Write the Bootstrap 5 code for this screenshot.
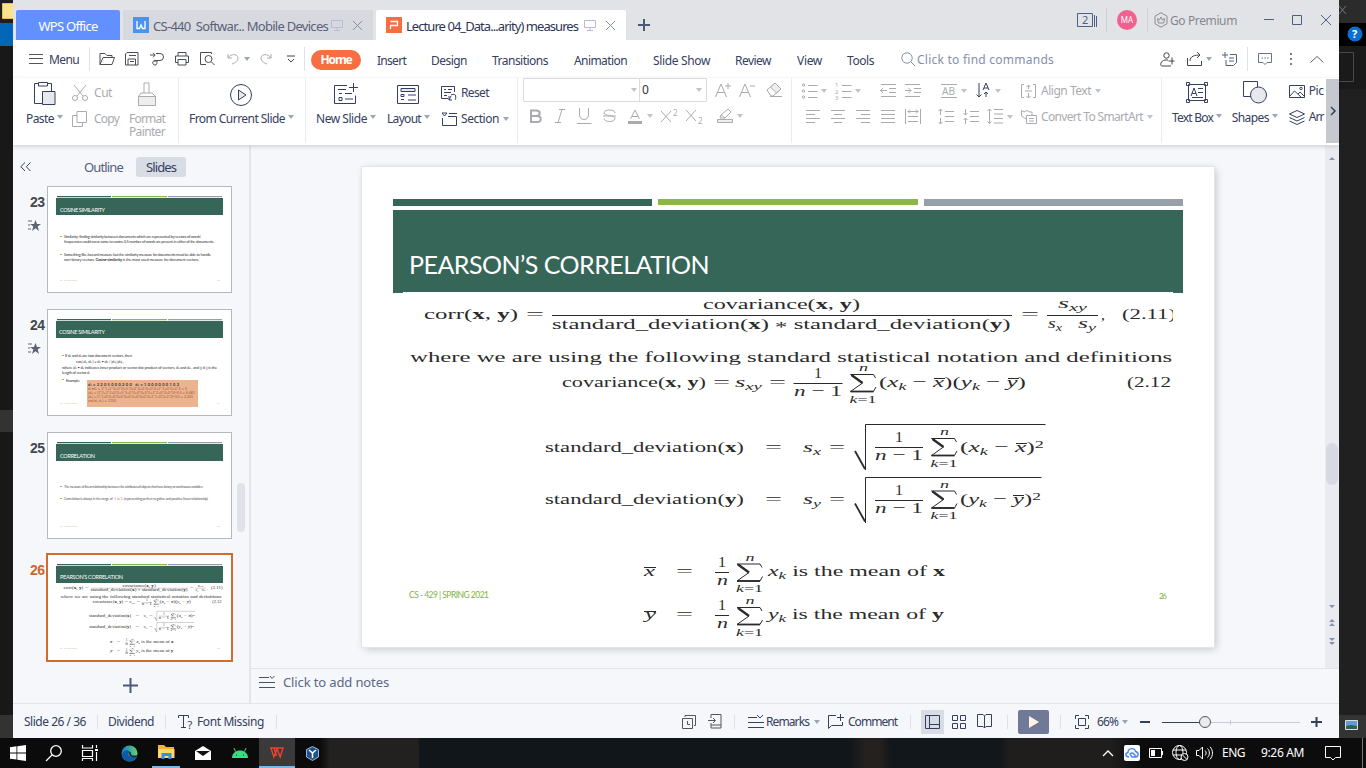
<!DOCTYPE html>
<html lang="en">
<head>
<meta charset="utf-8">
<meta name="viewport" content="width=device-width, initial-scale=1">
<title>WPS Office - Lecture 04</title>
<link href="https://cdn.jsdelivr.net/npm/bootstrap@5.3.0/dist/css/bootstrap.min.css" rel="stylesheet">
<style>
:root{--ink:#34405e;--dim:#a9abb0;--line:#e2e4ea;--pane:#f5f7fa;--green:#366658}
body{width:1366px;height:768px;overflow:hidden;background:#181818;font-family:"Noto Sans","Open Sans",sans-serif;font-size:12px;line-height:14px;color:var(--ink);fill:none;stroke:currentColor}
svg{display:block;overflow:visible}
svg text{stroke:none;fill:currentColor}
.fit{white-space:nowrap;display:inline-block}
.desk{height:738px}
.edge-l{width:13px;background:linear-gradient(#1f1f1f 23px,#0067b8 23px 46px,#181818 46px 410px,#333 410px 432px,#181818 432px 715px,#333 715px)}
.edge-r{width:27px;background:linear-gradient(#2b2b2b 23px,#000 23px 46px,#1a1a1a 46px 89px,#202020 89px 715px,#333 715px)}
.win{width:1326px;background:var(--pane)}
.strip{display:grid;align-items:center;justify-items:start}
.sep{width:1px;height:24px;background:#dfe1e6}
.caret{width:0;height:0;border:3px solid transparent;border-top:4px solid #9aa4bd;border-bottom:0}
/* title bar */
.titlebar{height:40px;background:#e2e3e7;padding-left:3px}
.doctab{height:30px;margin-top:10px;border-radius:2px 2px 0 0;font-size:13px}
.doctab .fit{margin-top:1px}
.tab-home{width:104px;background:#6390ff;color:#fff;margin-right:3px}
.tab-doc{width:250px;background:#d8d9de;color:#56617a;margin-right:3px;padding-left:10px;grid-template-columns:20px 178px 21px 20px}
.tab-on{background:#fff;color:#2c3654}
.sys{grid-template-columns:29px 11px 30px 7px 16px 94px 28px 29px 18px;height:40px;color:#4f5f86}
.sys .sep{background:#cfd1d7}
.avatar{width:20px;height:20px;background:#f1608f;color:#fff;font-size:8px}
.premium{color:#85878c;margin-top:2px}
/* menu bar */
.menubar{height:38px;background:#fff;padding-left:15px;grid-template-columns:21px 40px 10px 25px 26px 25px 25px 27px 17px 16px 27px 17px 7px 66px 54px 61px 82px 79px 82px 62px 50px 54px 16px 243px 27px 19px 16px 25px 11px 30px 22px 20px}
.menubar>.fit{margin-top:3px}
.menubar>.fit.up{margin-top:1px}
.finder{color:#8490ab}
.pill{width:50px;height:20px;margin-top:1px;background:#f66e42;color:#fff;font-weight:700}
/* ribbon */
.ribbon{height:68px;background:#fff;border-bottom:1px solid #dadce2;box-shadow:0 1px 4px #0002;z-index:2}
.ribbon .grp{border-right:1px solid #ebecf0;height:65px}
.off{color:var(--dim)}
.off .caret{border-top-color:#bcc3d3}
.big{height:54px;padding-top:4px}
.big .pic{height:30px}
.big .caret{margin-top:3px}
.big>.gap-1{gap:3px!important}
.duo{grid-auto-rows:26px}
.fontbox{width:184px;height:24px;border:1px solid #d9dbe0;border-radius:1px}
.fontbox .size{border-left:1px solid #d9dbe0;line-height:22px;padding-left:2px;margin-left:2px;color:#333}
.scroller{width:13px;height:64px;background:#c6c8d0;margin-top:1px}
.arrange{width:38px;overflow:hidden}
/* slide panel */
.panel{width:238px;border-right:2px solid var(--line)}
.phead{height:39px;font-size:13px;padding:3px 0 0 7px;grid-template-columns:64px 52px 50px}
.chip{width:50px;height:20px;background:#d8dde5;border-radius:3px}
.thumbrow{height:107px;padding-left:15px;margin-bottom:16px}
.no{width:19px;height:107px;padding:9px 0 0 2px;font-size:14px;letter-spacing:-.5px;font-weight:700;color:#45474e;font-family:"Liberation Sans",sans-serif}
.no svg{margin:11px 0 0 -2px}
.no.on{color:#c9682c}
.thumb{width:185px;height:107px;background:#fff;border:1px solid #b5b8be}
.thumb.cur{width:187px;height:109px;border:2px solid #d46b2c;margin:-1px}
.ptrack{width:8px;height:49px;background:#dfe2e9;border-radius:4px;margin-top:298px}
/* stage */
.stagebox{height:522px}
.slide{width:852px;height:480px;background:#fff;margin:21px 0 0 111px;box-shadow:0 0 0 1px #e4e5e8,2px 2px 8px #0003}
.bars{margin:0 31px;padding-top:32px;height:39px;gap:6px}
.bars>div{height:7px;flex:1}
.band{margin:4px 31px 0;height:83px;background:var(--green);color:#fff;font:25px/30px Lato,sans-serif;padding:39px 0 0 16px}
.figure-eq{margin:-1px 0 0 41px;width:770px;height:354px;background:#fff;overflow:hidden}
.vtrack{width:14px;background:#eaebf0}
.vtrack svg{fill:#8592ae;stroke:none}
.vthumb{width:12px;height:42px;background:#d6d9e1;border-radius:6px;margin-top:283px}
.notes{height:35px;border-top:1px solid var(--line);grid-template-columns:24px 120px;padding:0 0 8px 8px;color:#5b6885;font-size:13px}
/* status bar */
.status{height:35px;border-top:1px solid var(--line);padding:1px 0 0 11px;grid-template-columns:73px 11px 57px 13px 19px 79px 406px 26px 26px 14px 18px 48px 14px 20px 62px 11px 31px 25px 30px 11px 42px 15px 22px 25px 18px 22px 149px 16px}
.status .fit{margin-top:1px}
.status .sep{height:14px}
.viewbtn{width:23px;height:24px;background:#d8dde5}
.play{width:31px;height:24px;background:#707a97;border-radius:2px}
/* taskbar */
.taskbar{height:30px;background:linear-gradient(90deg,#0b0b0b 0 320px,#222120 330px 418px,#11161a 420px 850px,#25211f 866px 880px,#12171b 890px 1000px,#1f1e1d 1010px 1110px,#0c0c0c 1140px);color:#fff;padding-left:10px;grid-template-columns:36px 36px 39px 31px 43px 37px 27px 47px 796px 22px 25px 23px 24px 26px 39px 64px 37px 4px}
.run{width:28px;height:30px;border-bottom:2px solid #76b9ed}
.act{width:36px;background:#3a3a3a}
</style>
</head>
<body>
<div class="desk d-flex">
  <div class="edge-l"><svg width="13" height="24"><path d="M2.500 3.500h11v15h-11z" fill="#fbe38e" stroke="#e5c34f"/></svg></div>
  <div class="win d-flex flex-column">
    <div class="titlebar d-flex">
      <div class="doctab tab-home d-flex align-items-center justify-content-center"><span class="fit" data-w="59">WPS Office</span></div>
      <div class="doctab tab-doc strip">
        <svg width="16" height="16"><rect width="16" height="16" fill="#4a93f0" stroke="none"/><path d="M4 4v7.500h2.500L8 8l1.500 3.500H12V4" stroke="#fff" stroke-width="1.300"/></svg>
        <span class="fit" data-w="175">CS-440&nbsp; Softwar... Mobile Devices</span>
        <svg width="12" height="12" stroke="#b3bdd6"><path d="M.5 1.500h11v7H.5zM6 9v2M3 11.500h6"/></svg>
        <svg width="11" height="11" stroke="#8592ae"><path d="M1 1l9 9M10 1l-9 9"/></svg>
      </div>
      <div class="doctab tab-doc tab-on strip">
        <svg width="16" height="16"><rect width="16" height="16" fill="#f66e42" stroke="none"/><path d="M4.500 12V8.500h7v-4h-7" stroke="#fff" stroke-width="1.300"/></svg>
        <span class="fit" data-w="172">Lecture 04_Data...arity) measures</span>
        <svg width="12" height="12" stroke="#b3bdd6"><path d="M.5 1.500h11v7H.5zM6 9v2M3 11.500h6"/></svg>
        <svg width="11" height="11" stroke="#8592ae"><path d="M1 1l9 9M10 1l-9 9"/></svg>
      </div>
      <svg class="ms-2 mt-3" width="14" height="18"><path d="M1 9h12M7 3v12" stroke="#4b5a7a" stroke-width="2"/></svg>
      <div class="sys strip ms-auto">
        <svg width="21" height="15"><path d="M.5.5h15v13H.5zM17.500 2v12M19.500 3v11"/><text x="5" y="11" font-size="11">2</text></svg>
        <i class="sep"></i>
        <div class="avatar rounded-circle d-flex align-items-center justify-content-center">MA</div>
        <i class="sep"></i>
        <svg width="14" height="16" stroke="#8b8d92"><path d="M7 .7l6 3.500v7.500l-6 3.500-6-3.500V4.200zM3.500 6.500l2 1.500L7 5l1.500 3 2-1.500-.8 4.500H4.300z"/></svg>
        <span class="fit premium" data-w="67">Go Premium</span>
        <svg width="10" height="10"><path d="M0 4.500h10"/></svg>
        <svg width="10" height="10"><path d="M.5.5h9v9h-9z"/></svg>
        <svg width="10" height="10"><path d="M0 0l10 10M10 0L0 10"/></svg>
      </div>
    </div>

    <div class="menubar strip">
      <svg width="15" height="10"><path d="M1 .5h14M1 4.500h14M1 9.500h14" stroke="#555"/></svg>
      <span class="fit up" data-w="30">Menu</span>
      <i class="sep"></i>
      <svg width="16" height="14" stroke="#4a4d55"><path d="M1 12.500v-11h5l2 2h5v2M1 12.500l3-7h11.500l-2.500 7z"/></svg>
      <svg width="15" height="14" stroke="#4a4d55"><path d="M1.500 2L3 .5h11v12.500H1.500zM4 13V7h7.500v6M5 3.500h7M6 9.500h4"/></svg>
      <svg width="15" height="14" stroke="#4a4d55"><path d="M0 3h5M3 .8L5.200 3 3 5.200M6 1.500h4a3.500 3.500 0 0 1 0 7H5V10M5 8.500C2 8.500 2 13 5 13c2 0 2-2 2-4.500"/></svg>
      <svg width="14" height="14" stroke="#4a4d55"><path d="M3 4V.5h8V4M3 10.500H.5V4h13v6.500H11M3 7.500h8v5.500H3z"/></svg>
      <svg width="16" height="14" stroke="#4a4d55"><path d="M6 12.500H.5V.5h11V2M11.500 10l3 3"/><circle cx="8.500" cy="7" r="3.500"/></svg>
      <svg width="12" height="12" class="off"><path d="M1 1v4h4M1 5c3-5 10-4 10 0 0 3-3 5-6 6"/></svg>
      <i class="caret"></i>
      <svg width="12" height="12" class="off"><path d="M11 1v4H7M11 5C8 0 1 1 1 5c0 3 3 5 6 6"/></svg>
      <svg width="9" height="9"><path d="M0 1h8M1 4l3 3 3-3" stroke="#444"/></svg>
      <i class="sep"></i>
      <div class="pill rounded-pill d-flex align-items-center justify-content-center"><span class="fit" data-w="31">Home</span></div>
      <span class="fit" data-w="29">Insert</span>
      <span class="fit" data-w="36">Design</span>
      <span class="fit" data-w="56">Transitions</span>
      <span class="fit" data-w="53">Animation</span>
      <span class="fit" data-w="57">Slide Show</span>
      <span class="fit" data-w="36">Review</span>
      <span class="fit" data-w="25">View</span>
      <span class="fit" data-w="27">Tools</span>
      <svg width="14" height="14" stroke="#8592ae"><circle cx="6" cy="6" r="5.200"/><path d="M10 10l4 4"/></svg>
      <span class="fit up finder" data-w="137">Click to find commands</span>
      <svg width="15" height="15" stroke="#444"><circle cx="6.500" cy="3.500" r="2.700"/><path d="M8 8H5c-5 1-5 6-3 6h9M12 5.500v7M8.500 9h6"/></svg>
      <svg width="16" height="14" stroke="#444"><path d="M.5 6v7.500h14V9M3 9c0-5 5-6 10-6M10 0l3 3-3 3"/></svg>
      <i class="caret"></i>
      <svg width="16" height="14" stroke="#55607c"><path d="M0 3h6M3 0v6M8 2.500h6.500v8l-3 3H4V8M7 6h5M7 9h5"/></svg>
      <i class="sep"></i>
      <svg width="14" height="13" stroke="#6a7388"><path d="M.5.5h13v9H9l-2 2-2-2H.5zM3.500 5h1.500M6.300 5h1.500M9 5h1.500"/></svg>
      <svg width="6" height="12" fill="#777d8c" stroke="none"><path d="M2 0h2v2H2zM2 5h2v2H2zM2 10h2v2H2z"/></svg>
      <svg width="15" height="8" stroke="#55607c"><path d="M.5 7.500l6.500-6 6.500 6"/></svg>
    </div>

    <div class="ribbon d-flex">
      <div class="grp d-flex" style="width:166px">
        <div class="big" style="width:57px;padding-left:13px">
          <div class="pic ps-2"><svg width="22" height="24"><path d="M8 21.500H.5v-20H4M14 1.500h3.500V9M4.500.5h9V4h-9z"/><path d="M8.500 9.500h12.500v13H8.500z" fill="#e7e9ef"/></svg></div>
          <div class="d-flex gap-1"><span class="fit" data-w="28">Paste</span><i class="caret"></i></div>
        </div>
        <div class="strip duo off" style="width:50px;grid-template-columns:22px 28px;height:52px;padding-left:2px;margin-top:2px">
          <svg width="16" height="16"><path d="M2 0l9 11M14 0L5 11"/><circle cx="3" cy="13" r="2.500"/><circle cx="13" cy="13" r="2.500"/></svg><span class="fit" data-w="18">Cut</span>
          <svg width="16" height="16"><path d="M5 .5h9.500v11H5zM5 4.500H.5v11h10v-4"/></svg><span class="fit" data-w="25">Copy</span>
        </div>
        <div class="big off text-center" style="width:54px">
          <div class="pic d-flex justify-content-center"><svg width="18" height="24"><path d="M6 11V1h5v10M.5 14.500L3 11h11l3.500 3.500z"/><path d="M.5 14.500h17v9H.5z" fill="#eee"/></svg></div>
          <div style="line-height:13px"><span class="fit" data-w="36">Format</span><br><span class="fit" data-w="36">Painter</span></div>
        </div>
      </div>
      <div class="grp big" style="width:127px;padding-left:10px">
        <div class="pic" style="padding-left:41px"><svg width="22" height="24"><circle cx="11" cy="13" r="10.500"/><path d="M8.500 8l7.500 5-7.500 5z" fill="#e7e9ef"/></svg></div>
        <div class="d-flex gap-1"><span class="fit" data-w="96">From Current Slide</span><i class="caret"></i></div>
      </div>
      <div class="grp d-flex" style="width:212px">
        <div class="big" style="width:81px;padding-left:10px">
          <div class="pic" style="padding-left:18px"><svg width="25" height="24"><path d="M13 3.500H.5v18h21v-8M4 7.500h8M11 11.500h7M11 17h8M5 15.500h3v3H5zM5 11.500h3M19.500 1v9M15 5.500h9"/></svg></div>
          <div class="d-flex gap-1"><span class="fit" data-w="51">New Slide</span><i class="caret"></i></div>
        </div>
        <div class="big" style="width:51px">
          <div class="pic" style="padding-left:10px"><svg width="22" height="24"><path d="M.5 3.500h21v18H.5zM11 13h8M11 18h8M4 12.500h3v2H4zM4 17.500h3"/><path d="M4 6.500h14v3H4z" fill="#e7e9ef"/></svg></div>
          <div class="d-flex gap-1"><span class="fit" data-w="34">Layout</span><i class="caret"></i></div>
        </div>
        <div class="strip duo" style="grid-template-columns:20px 42px 10px;padding-left:3px;margin-top:2px;height:52px">
          <svg width="16" height="15"><path d="M7 12.500H.5V.5h13V6M3 3.500h2M7 3.500h4M3 6.500h7M3 9.500h3M8 14l2-4 M8 10v4h3M10 9c6-3 5 4 4 5"/></svg><span class="fit" data-w="28">Reset</span><i></i>
          <svg width="16" height="15"><path d="M1 1h5L3.500 4zM8 1.500h8M7 4.500h8.500v9H1.500V6"/></svg><span class="fit" data-w="38">Section</span><i class="caret"></i>
        </div>
      </div>
      <div class="grp off" style="width:274px;padding-left:5px">
        <div class="strip" style="grid-template-columns:192px 24px 27px 20px;height:24px">
          <div class="fontbox d-flex align-items-center"><i class="caret" style="margin-left:107px"></i><span class="size">0</span><i class="caret ms-auto me-1"></i></div>
          <svg width="16" height="16"><path d="M.5 15L6 2l5.500 13M2.500 10.500h7M13 1v6M10 4h6"/></svg>
          <svg width="16" height="16"><path d="M.5 15L6 2l5.500 13M2.500 10.500h7M11 4h5"/></svg>
          <svg width="17" height="16"><path d="M1 8l8-7 6 6-8 7H5zM4 14.500h12"/><path d="M4.500 5L9 1l6 6-4.500 4z" fill="#eee"/></svg>
        </div>
        <div class="strip" style="grid-template-columns:26px 22px 26px 25px 19px 14px 25px 31px 20px 10px;height:28px;padding-left:6px">
          <svg width="12" height="15" stroke-width="2"><path d="M2 1.500h5c5 0 5 5.500 0 5.500H2zM2 7h6c5 0 5 6 0 6H2z"/></svg>
          <svg width="10" height="14"><path d="M4 .5h6M0 13.500h6M7 .5L3 13.500"/></svg>
          <svg width="15" height="16"><path d="M2.500 0v7c0 6 9 6 9 0V0M0 15.500h14.500"/></svg>
          <svg width="13" height="14"><path d="M12 4c0-4-11-4-11 0 0 3 11 2 11 5.500 0 4-11 4-11 0M0 7h13"/></svg>
          <svg width="14" height="15"><path d="M2.500 10L7 1l4.500 9M4 7.500h6"/><path d="M0 13.500h14" stroke-width="3"/></svg><i class="caret"></i>
          <svg width="17" height="16"><path d="M0 3l10 11M10 3L0 14"/><text x="12" y="8" font-size="8">2</text></svg>
          <svg width="17" height="16"><path d="M0 2l10 11M10 2L0 13"/><text x="12" y="16" font-size="8">2</text></svg>
          <svg width="17" height="16"><path d="M3 10l1-3 7-6 3 3-6 6zM4 7l4 3"/><path d="M.5 11.500h15v3H.5z" fill="#eee"/></svg><i class="caret"></i>
        </div>
      </div>
      <div class="grp off d-flex" style="width:370px;padding-left:10px">
        <div style="width:219px">
          <div class="strip" style="grid-template-columns:19px 15px 19px 25px 25px 36px 20px 15px 19px 10px;height:25px">
            <svg width="16" height="16"><circle cx="1.500" cy="2" r="1.200"/><circle cx="1.500" cy="8" r="1.200"/><circle cx="1.500" cy="14" r="1.200"/><path d="M6 2.500h9.500M6 8.500h9.500M6 14.500h9.500"/></svg><i class="caret"></i>
            <svg width="16" height="16"><text x="-1" y="4" font-size="6">1</text><text x="-1" y="11" font-size="6">2</text><text x="-1" y="17" font-size="6">3</text><path d="M6 2.500h9.500M6 8.500h9.500M6 14.500h9.500"/></svg><i class="caret"></i>
            <svg width="16" height="14"><path d="M1 .5h15M1 12.500h15M9 4.500h7M9 8.500h7M0 6.500h7M3 4L.5 6.500 3 9"/></svg>
            <svg width="16" height="14"><path d="M0 .5h15M0 12.500h15M9 4.500h7M9 8.500h7M0 6.500h6M3.500 4L6 6.500 3.500 9"/></svg>
            <svg width="16" height="14"><path d="M0 .5h16M0 13.500h16"/><text x="1" y="11" font-size="10" textLength="13">AB</text></svg><i class="caret"></i>
            <svg width="15" height="15" stroke="#34405e"><path d="M3 0v14M.5 11.500L3 14l2.500-2.500M7 7l3-7 3 7M8 5h4M10 9v5M8 11l2-2 2 2"/></svg><i class="caret"></i>
          </div>
          <div class="strip" style="grid-template-columns:25px 25px 25px 24px 33px 25px 24px 20px 10px;height:27px;padding-left:4px">
            <svg width="15" height="13"><path d="M0 .5h14M0 4.500h9M0 8.500h14M0 12.500h9"/></svg>
            <svg width="15" height="13"><path d="M0 .5h14M3 4.500h8M0 8.500h14M3 12.500h8"/></svg>
            <svg width="15" height="13"><path d="M0 .5h14M5 4.500h9M0 8.500h14M5 12.500h9"/></svg>
            <svg width="15" height="13"><path d="M0 .5h14M0 4.500h14M0 8.500h14M0 12.500h14"/></svg>
            <svg width="16" height="15"><path d="M.5 0v15M15.500 0v15M3 7.500h10M3 12.500h10M3 2.500h10M5 .5l-2 2 2 2M11 .5l2 2-2 2"/></svg>
            <svg width="16" height="15"><path d="M7 2.500h9M7 7.500h9M7 12.500h9M2.500 0v6M.5 2l2-2 2 2M2.500 9v6M.5 13l2 2 2-2"/></svg>
            <svg width="16" height="15"><path d="M7 2.500h9M7 7.500h9M7 12.500h9M2.500 0v6M.5 4l2 2 2-2M2.500 9v6M.5 11l2-2 2 2"/></svg>
            <svg width="16" height="15"><path d="M7 .5h9M7 5h9M7 9.500h9M7 14h9M2.500 0v14.500M.5 2l2-2 2 2M.5 12.500l2 2 2-2"/></svg><i class="caret"></i>
          </div>
        </div>
        <div class="strip" style="grid-template-columns:20px auto 10px;grid-auto-rows:26px;height:52px;width:140px">
          <svg width="16" height="15"><path d="M3 .5H.5v13H3M12 .5h2.500v13H12M4 7h7M7.500 1v4M5.500 3l2-2 2 2M7.500 9v5M5.500 12l2 2 2-2"/></svg><div class="d-flex align-items-center gap-1"><span class="fit" data-w="50">Align Text</span><i class="caret"></i></div><i></i>
          <svg width="16" height="15"><path d="M5 9L.5 6V.5L3 2l3-1.500L9 2h2v3M5.500 5.500h10v8h-10zM8 8.500h5M8 11h5"/></svg><div class="d-flex align-items-center gap-1"><span class="fit" data-w="102">Convert To SmartArt</span><i class="caret"></i></div><i></i>
        </div>
      </div>
      <div class="d-flex" style="width:164px;padding-left:10px">
        <div class="big" style="width:61px;margin-top:-1px">
          <div class="pic" style="padding-left:14px"><svg width="22" height="23"><path d="M2.500 3.500h17v16h-17zM.5 1.500h3v3h-3zM18.500 1.500h3v3h-3zM.5 18.500h3v3h-3zM18.500 18.500h3v3h-3z"/><path d="M5 15l3-8 3 8M6 12.500h4M12 7.500h5M12 11.500h5M6 16.500h11"/></svg></div>
          <div class="d-flex gap-1"><span class="fit" data-w="41">Text Box</span><i class="caret"></i></div>
        </div>
        <div class="big" style="width:58px;margin-top:-1px">
          <div class="pic" style="padding-left:11px"><svg width="24" height="23"><path d="M.5.5h14v15H.5z"/><circle cx="15.500" cy="14" r="8" fill="#e7e9ef"/></svg></div>
          <div class="d-flex gap-1"><span class="fit" data-w="37">Shapes</span><i class="caret"></i></div>
        </div>
        <div class="strip duo arrange" style="grid-template-columns:20px 16px;height:52px">
          <svg width="16" height="13"><path d="M.5.5h15v12H.5zM1 11l4.500-5L12 12M9 9l2-2 4 4"/><circle cx="12" cy="3.500" r="1.200"/></svg><span class="fit" data-w="15">Pic</span>
          <svg width="16" height="15"><path d="M.5 4L8 .5 15.500 4 8 7.500zM.5 7.500L8 11l7.500-3.500M.5 11L8 14.500l7.500-3.500"/></svg><span class="fit" data-w="15">Arr</span>
        </div>
      </div>
      <div class="scroller d-flex align-items-center justify-content-center"><svg width="6" height="8"><path d="M1 0l4 4-4 4" stroke-width="1.500"/></svg></div>
    </div>

    <div class="d-flex" style="height:557px">
      <div class="panel">
        <div class="phead strip">
          <svg width="11" height="10"><path d="M5 .5L.8 4.700 5 9M10.500.5L6.300 4.700 10.500 9"/></svg>
          <span class="fit" data-w="39" style="color:#56617a">Outline</span>
          <div class="chip d-flex align-items-center justify-content-center"><span class="fit" data-w="30">Slides</span></div>
        </div>
        <div class="d-flex">
          <div style="width:219px;padding-top:1px">
            <div class="thumbrow d-flex">
              <div class="no">23<svg width="13" height="12" viewBox="0 0 13 12"><path d="M0 1h4M0 5h2M0 9h3" stroke="#5c6474"/><path d="M7.500 0l1.500 4h4L9.700 6.500 11 11 7.500 8.300 4 11l1.300-4.500L2 4h4z" fill="#5c6474" stroke="none"/></svg></div>
              <div class="thumb"><svg width="183" height="105" viewBox="48 187 183 105" font-family="Lato,sans-serif">
                <g id="frame" stroke="none"><path d="M57 196h54v1.200H57z" fill="#366658"/><path d="M112 196h55v1.200h-55z" fill="#8cb64a"/><path d="M168 196h54v1.200h-54z" fill="#979fa9"/><path d="M56 198h167v17H56z" fill="#366658"/><text x="60" y="280.500" font-size="2.500" textLength="17" lengthAdjust="spacingAndGlyphs" style="fill:#a9c97a">CS - 429 | SPRING 2021</text></g>
                <text x="60" y="212" font-size="5.500" textLength="45" style="fill:#fff">COSINE SIMILARITY</text>
                <path d="M60 236.500h2M60 254.500h2" stroke="#a5b94a"/>
                <g font-size="4" style="color:#333"><text x="64" y="238" textLength="137">Similarity: finding similarity between documents which are represented by vectors of words'</text><text x="64" y="243" textLength="150">frequencies could occur same to cosine 0.5 number of words are present in either of the documents.</text><text x="64" y="256" textLength="147">Something like Jaccard measure but the similarity measure for documents must be able to handle</text><text x="64" y="260.500" textLength="135">non-binary vectors. <tspan font-weight="700">Cosine similarity</tspan> is the most used measure for document vectors.</text></g>
                <text x="217" y="280.500" font-size="2.500" style="fill:#a9c97a">23</text>
              </svg></div>
            </div>
            <div class="thumbrow d-flex">
              <div class="no">24<svg width="13" height="12" viewBox="0 0 13 12"><path d="M0 1h4M0 5h2M0 9h3" stroke="#5c6474"/><path d="M7.500 0l1.500 4h4L9.700 6.500 11 11 7.500 8.300 4 11l1.300-4.500L2 4h4z" fill="#5c6474" stroke="none"/></svg></div>
              <div class="thumb"><svg width="183" height="105" viewBox="48 310 183 105" font-family="Lato,sans-serif">
                <use href="#frame" y="123"/>
                <text x="59" y="334" font-size="5.500" textLength="46" style="fill:#fff">COSINE SIMILARITY</text>
                <path d="M87 380h111v27H87z" fill="#ecb48e" stroke="none"/><path d="M62 355.500h2M62 379.500h2" stroke="#a5b94a"/>
                <g font-size="4" style="color:#333"><text x="65" y="357" textLength="67">If d₁ and d₂ are two document vectors, then</text><text x="76" y="363" textLength="48">cos( d₁, d₂ ) = d₁ • d₂ / |d₁| |d₂| ,</text><text x="62" y="369" textLength="155">where d₁ • d₂ indicates inner product or vector dot product of vectors, d₁ and d₂ , and || d || is the</text><text x="62" y="373.500" textLength="28">length of vector d.</text><text x="66" y="381.500" textLength="14">Example:</text>
                <text x="88" y="385.500" font-weight="700" textLength="91">d₁ = 3 2 0 5 0 0 0 2 0 0 &#160; d₂ = 1 0 0 0 0 0 0 1 0 2</text>
                <g style="color:#a5553e" font-size="3.600"><text x="88" y="389.500" textLength="99">d₁•d₂ = 3*1+2*0+0*0+5*0+0*0+0*0+0*0+2*1+0*0+0*2 = 5</text><text x="88" y="393.500" textLength="107">|d₁| = (3*3+2*2+0*0+5*5+0*0+0*0+0*0+2*2+0*0+0*0)^0.5 = 6.481</text><text x="88" y="397.500" textLength="105">|d₂| = (1*1+0*0+0*0+0*0+0*0+0*0+0*0+1*1+0*0+2*2)^0.5 = 2.245</text><text x="88" y="402" textLength="28">cos( d₁, d₂ ) = .3150</text></g></g>
                <text x="217" y="403.500" font-size="2.500" style="fill:#a9c97a">24</text>
              </svg></div>
            </div>
            <div class="thumbrow d-flex" style="margin-bottom:15px">
              <div class="no">25</div>
              <div class="thumb"><svg width="183" height="105" viewBox="48 433 183 105" font-family="Lato,sans-serif">
                <use href="#frame" y="246"/>
                <text x="60" y="458" font-size="5.500" textLength="35" style="fill:#fff">CORRELATION</text>
                <path d="M60 486.500h2M60 498.500h2" stroke="#a5b94a"/>
                <g font-size="3.500" style="color:#555"><text x="64" y="488" textLength="139">The measure of linear relationship between the attributes of objects that have binary or continuous variables.</text><text x="64" y="500" textLength="144">Correlation is always in the range of <tspan style="fill:#d8818b">-1 to 1</tspan>. (representing perfect negative and positive linear relationship)</text></g>
                <text x="217" y="526.500" font-size="2.500" style="fill:#a9c97a">25</text>
              </svg></div>
            </div>
            <div class="thumbrow d-flex">
              <div class="no on">26</div>
              <div class="thumb cur"><svg width="183" height="105" viewBox="48 555 183 105" font-family="Lato,sans-serif">
                <use href="#frame" y="368"/>
                <text x="60" y="579" font-size="5.500" textLength="63" style="fill:#fff">PEARSON’S CORRELATION</text>
                <use href="#eq" transform="translate(-26.200 521.500) scale(.2115)" style="color:#555"/>
                <text x="217" y="648.500" font-size="2.500" style="fill:#a9c97a">26</text>
              </svg></div>
            </div>
            <svg width="236" height="17" style="padding-left:110px"><path d="M0 8.500h15M7.500 1v15" stroke="#4b5a7a" stroke-width="2"/></svg>
          </div>
          <div class="ptrack" style="margin-left:5px"></div>
        </div>
      </div>

      <div class="flex-grow-1">
        <div class="stagebox d-flex">
          <div style="width:1074px">
            <div class="slide">
              <div class="bars d-flex"><div style="background:#366658"></div><div style="background:#8cb64a;height:6px"></div><div style="background:#979fa9"></div></div>
              <div class="band"><span class="fit" data-w="300">PEARSON’S CORRELATION</span></div>
              <svg class="figure-eq" viewBox="403 292 770 354">
                <defs>
                  <g id="sum"><path d="M26 4L24 .5H1l12 8.500L1 17.500h23l2.500-4.500" stroke-width="1"/><path d="M2 1l11 8" stroke-width="2.400"/><path d="M1 17.500h23" stroke-width="1.800"/><text x="9.500" y="-3" font-size="10" font-style="italic" textLength="9" lengthAdjust="spacingAndGlyphs">n</text><text x="0" y="28.500" font-size="10" textLength="27" lengthAdjust="spacingAndGlyphs"><tspan font-style="italic">k</tspan>=1</text></g>
                  <g id="over"><text x="0" y="0" font-size="14" textLength="8" lengthAdjust="spacingAndGlyphs">1</text></g>
                </defs>
                <g id="eq" font-size="15.500" font-family="'Liberation Serif',serif" color="#2b2b2b">
                  <g class="eqt"><text x="424" y="319.500" data-l="94">corr(<tspan font-weight="700">x</tspan>, <tspan font-weight="700">y</tspan>)</text><text x="526" y="319.500" data-l="18">=</text>
                  <text x="703" y="309.500" data-l="157">covariance(<tspan font-weight="700">x</tspan>, <tspan font-weight="700">y</tspan>)</text>
                  <text x="552" y="329" data-l="459">standard_deviation(<tspan font-weight="700">x</tspan>) <tspan dy="3">*</tspan><tspan dy="-3"> standard_deviation(</tspan><tspan font-weight="700">y</tspan>)</text>
                  <text x="1021" y="319.500" data-l="18">=</text>
                  <text x="1058" y="308.500" data-l="29" font-style="italic">s<tspan dy="3" font-size="11">xy</tspan></text>
                  <text x="1048" y="328" data-l="14" font-style="italic">s<tspan dy="3" font-size="11">x</tspan></text>
                  <text x="1078" y="328" data-l="18" font-style="italic">s<tspan dy="3" font-size="11">y</tspan></text>
                  <text x="1101" y="319.500">,</text><text x="1122" y="319.500" data-l="54">(2.11)</text>
                  <text x="410" y="362" data-l="763">where we are using the following standard statistical notation and definitions</text>
                  <text x="562" y="387.500" data-l="144">covariance(<tspan font-weight="700">x</tspan>, <tspan font-weight="700">y</tspan>)</text>
                  <text x="713" y="387.500" data-l="17">=</text><text x="735" y="387.500" data-l="27" font-style="italic">s<tspan dy="3" font-size="11">xy</tspan></text><text x="769" y="387.500" data-l="17">=</text>
                  <text x="794" y="396" data-l="48"><tspan font-style="italic">n</tspan> − 1</text>
                  <text x="879" y="387.500" data-l="147">(<tspan font-style="italic">x</tspan><tspan dy="3" font-size="11" font-style="italic">k</tspan><tspan dy="-3"> − </tspan><tspan font-style="italic">x</tspan>)(<tspan font-style="italic">y</tspan><tspan dy="3" font-size="11" font-style="italic">k</tspan><tspan dy="-3"> − </tspan><tspan font-style="italic">y</tspan>)</text>
                  <text x="1127" y="387.500" data-l="44">(2.12</text>
                  <text x="545" y="452" data-l="199">standard_deviation(<tspan font-weight="700">x</tspan>)</text><text x="765" y="452" data-l="17">=</text>
                  <text x="803" y="452" data-l="18" font-style="italic">s<tspan dy="3" font-size="11">x</tspan></text><text x="829" y="452" data-l="16">=</text>
                  <text x="875" y="460.500" data-l="48"><tspan font-style="italic">n</tspan> − 1</text>
                  <text x="960" y="452" data-l="84">(<tspan font-style="italic">x</tspan><tspan dy="3" font-size="11" font-style="italic">k</tspan><tspan dy="-3"> − </tspan><tspan font-style="italic">x</tspan>)<tspan dy="-4" font-size="11">2</tspan></text>
                  <text x="545" y="504.500" data-l="199">standard_deviation(<tspan font-weight="700">y</tspan>)</text><text x="765" y="504.500" data-l="17">=</text>
                  <text x="803" y="504.500" data-l="18" font-style="italic">s<tspan dy="3" font-size="11">y</tspan></text><text x="829" y="504.500" data-l="16">=</text>
                  <text x="875" y="513" data-l="48"><tspan font-style="italic">n</tspan> − 1</text>
                  <text x="960" y="504.500" data-l="81">(<tspan font-style="italic">y</tspan><tspan dy="3" font-size="11" font-style="italic">k</tspan><tspan dy="-3"> − </tspan><tspan font-style="italic">y</tspan>)<tspan dy="-4" font-size="11">2</tspan></text>
                  <text x="644" y="576" data-l="11" font-style="italic">x</text><text x="676" y="576" data-l="17">=</text><text x="717" y="585" data-l="11" font-style="italic">n</text>
                  <text x="768" y="576" data-l="177"><tspan font-style="italic">x</tspan><tspan dy="3" font-size="11" font-style="italic">k</tspan><tspan dy="-3"> is the mean of </tspan><tspan font-weight="700">x</tspan></text>
                  <text x="645" y="619" data-l="11" font-style="italic">y</text><text x="676" y="619" data-l="17">=</text><text x="717" y="628" data-l="11" font-style="italic">n</text>
                  <text x="768" y="619" data-l="176"><tspan font-style="italic">y</tspan><tspan dy="3" font-size="11" font-style="italic">k</tspan><tspan dy="-3"> is the mean of </tspan><tspan font-weight="700">y</tspan></text></g>
                  <use href="#over" x="814" y="378"/><use href="#over" x="895" y="442"/><use href="#over" x="895" y="495"/><use href="#over" x="718" y="567"/><use href="#over" x="718" y="610"/>
                  <use href="#sum" x="849.500" y="374"/><use href="#sum" x="930.500" y="438"/><use href="#sum" x="930.500" y="490.500"/><use href="#sum" x="736" y="563.500"/><use href="#sum" x="736" y="607"/>
                  <path d="M552 315.500h460M1047 315.500h51M793.500 383.500h49M875 447.500h48M875 500.500h48M715 572.500h14M715 615.500h14M934 378.500h11M1008 378.500h11M1016 443.500h11M1013 495.500h11M644 567.500h12M644 611.500h12M865.500 470V424.500h180M865.500 523V477.500h176"/>
                  <path d="M855 451l10 18M855 503.500l10 18" stroke-width="1.800"/>
                </g>
                <g font-family="Lato,sans-serif" style="color:#7fb341"><text x="409" y="598" font-size="8.500" textLength="80">CS - 429 | SPRING 2021</text><text x="1159" y="599" font-size="8" textLength="8">26</text></g>
              </svg>
            </div>
          </div>
          <div class="vtrack d-flex flex-column align-items-center">
            <svg width="6" height="3" class="flex-shrink-0" style="margin-top:11px"><path d="M0 3l3-3 3 3z"/></svg>
            <div class="vthumb flex-shrink-0"></div>
            <svg width="8" height="42" class="flex-shrink-0" style="margin-top:119px"><path d="M1 1h6L4 4zM1 18l3-3 3 3zM1 22l3-3 3 3zM1 34h6l-3 3zM1 38h6l-3 3z"/></svg>
          </div>
        </div>
        <div class="notes strip">
          <svg width="16" height="15"><path d="M0 2.500h10M0 7.500h16M0 12.500h16M11 1l2 2.500L15.500 1" stroke="#4a5163"/></svg>
          <span class="fit" data-w="106">Click to add notes</span>
        </div>
      </div>
    </div>

    <div class="status strip">
      <span class="fit" data-w="62">Slide 26 / 36</span><i class="sep"></i><span class="fit" data-w="46">Dividend</span><i class="sep"></i>
      <svg width="15" height="14"><path d="M.5 3V.5h10V3M5.500.5v12M3 12.500h5"/><text x="9.500" y="14" font-size="11">?</text></svg>
      <span class="fit" data-w="67">Font Missing</span><i class="sep"></i>
      <svg width="14" height="14" stroke="#555"><path d="M.5 3.500h10v10H.5zM3 2V.5h10.500v10H12M5.500 6v3.500H8"/></svg>
      <svg width="14" height="15" stroke="#555"><path d="M3 4V.5h10v13.500H3V9M0 6.500h7M5 4l2.500 2.500L5 9M3 11h10"/></svg>
      <i class="sep"></i>
      <svg width="16" height="14"><path d="M0 2.500h9M0 7.500h16M0 12.500h16M9 0l3 3 3-3"/></svg>
      <span class="fit" data-w="43">Remarks</span><i class="caret"></i>
      <svg width="17" height="15"><path d="M8 1.500H.5v13l3-3h11V8M12.500 0v7M9 3.500h7"/></svg>
      <span class="fit" data-w="49">Comment</span><i class="sep"></i>
      <div class="viewbtn d-flex align-items-center justify-content-center"><svg width="15" height="14"><path d="M.5.5h14v13H.5zM4.500.5v13M4.500 9.500h10"/></svg></div>
      <svg width="14" height="14"><path d="M.5.5h5v5h-5zM8.500.5h5v5h-5zM.5 8.500h5v5h-5zM8.500 8.500h5v5h-5z"/></svg>
      <svg width="16" height="15"><path d="M7.500 2L6 .5H.5v12H6l1.500 1.500L9 12.500h5.500V.5H9zM7.500 2v12"/></svg>
      <i class="sep"></i>
      <div class="play d-flex align-items-center justify-content-center"><svg width="10" height="12" stroke="none" fill="#fff3e8"><path d="M0 0l10 6-10 6z"/></svg></div>
      <i class="sep"></i>
      <svg width="14" height="14"><path d="M.5 4V.5H4M10 .5h3.500V4M13.500 10v3.500H10M4 13.500H.5V10M3.500 3.500h7v7h-7z"/></svg>
      <span class="fit" data-w="21">66%</span><i class="caret"></i>
      <svg width="10" height="4"><path d="M0 2h10" stroke-width="2"/></svg>
      <svg width="138" height="14"><path d="M43 7.500h95M68.500 5v5" stroke="#c9ccd4"/><path d="M0 7.500h40"/><circle cx="43" cy="7" r="5.500" fill="#eaebee" stroke="#555"/></svg>
      <svg width="11" height="10"><path d="M0 5h11M5.500 0v10" stroke-width="2"/></svg>
    </div>
  </div>
  <div class="edge-r">
    <svg width="27" height="738"><path d="M0 6l7 8M7 6l-7 8" stroke="#777"/><circle cx="16" cy="34" r="7.500" fill="#0a6fd0" stroke="none"/><text x="13" y="38" font-size="11" font-weight="700" style="fill:#fff">?</text><path d="M0 52.500h14.500v29H0" stroke="#4a4a4a"/><path d="M6.500 720.500h12v9h-12z" fill="#5e9bd8" stroke="#ddd"/><path d="M7 726l5-1 6 1v3H7z" fill="#2e6158" stroke="none"/></svg>
  </div>
</div>

<div class="taskbar strip">
  <svg width="16" height="16" fill="#fff" stroke="none"><path d="M0 2.200L6.500 1.300v6.200H0zM7.300 1.200L16 0v7.500H7.300zM0 8.400h6.500v6.200L0 13.700zM7.300 8.400H16V16l-8.700-1.200z"/></svg>
  <svg width="16" height="16"><circle cx="10" cy="6" r="5.300" stroke-width="1.300"/><path d="M6 10l-6 6" stroke-width="1.300"/></svg>
  <svg width="17" height="16"><path d="M.5 0v3h10V0M.5 5.500h10v6H.5zM.5 16v-2.500h10V16M14.500 0v3M14.500 7v9" stroke-width="1.200"/><path d="M13 4h3v2h-3z" fill="#fff" stroke="none"/></svg>
  <svg width="17" height="17"><defs><linearGradient id="eg"><stop stop-color="#1478d4"/><stop offset="1" stop-color="#62d66a"/></linearGradient></defs><circle cx="8.500" cy="8.500" r="8" fill="url(#eg)" stroke="none"/><path d="M1 10C2 5 7 4 9 7c-3 1-2 5 3 5h4c-3 6-14 6-15-2z" fill="#0c59a4" stroke="none"/><path d="M9 7c-1 4 3 5 7 4" stroke="#0b2030" stroke-width="1.500"/></svg>
  <div class="run d-flex align-items-center justify-content-center"><svg width="17" height="14" stroke="none"><path d="M0 0h6l2 2h8v11H0z" fill="#f5b528"/><path d="M0 4h16.500v9H0z" fill="#ffd965"/><path d="M3.500 14V8h10v6h-3v-3h-4v3z" fill="#3b8ede"/></svg></div>
  <svg width="16" height="14" stroke="none"><path d="M0 5l8-5 8 5v9H0z" fill="#fff"/><path d="M1 5h14l-7 5z" fill="#111"/></svg>
  <svg width="16" height="12"><path d="M0 11c0-10 16-10 16 0z" fill="#3ddc84" stroke="none"/><path d="M3.500 4.500L2 1M12.500 4.500L14 1" stroke="#3ddc84"/><path d="M4 8h1M11 8h1" stroke="#123"/></svg>
  <div class="run act d-flex align-items-center justify-content-center"><svg width="14" height="11"><path d="M0 1h13l-2.800 9L7 2 3.800 10 1 1M4 1l2.500 8" stroke="#f0412c" stroke-width="1.400"/></svg></div>
  <svg width="13" height="15"><path d="M6.500.5l6 3v7.500l-6 3.500-6-3.500V3.500z" fill="#21508f" stroke="#9cb6d6"/><path d="M3 4l3.500 3L10 4M6.500 7v5" stroke="#fff" stroke-width="1.500"/></svg>
  <svg width="12" height="8"><path d="M1 7l5-5 5 5" stroke-width="1.300"/></svg>
  <svg width="16" height="16"><rect width="16" height="16" rx="2" fill="#fff" stroke="none"/><path d="M5 12C1 12 1 8 4 7.500c0-5 7-5 7.500-1 4 1 3 5.500 0 5.500H8l-2-3c2-2 4-1 6 3" stroke="#4a86f0" stroke-width="1.400"/></svg>
  <svg width="15" height="10"><path d="M.5.5h12v9H.5zM13.500 3v4"/><path d="M2 2h4v6H2z" fill="#fff" stroke="none"/></svg>
  <svg width="17" height="16"><circle cx="7.500" cy="7.500" r="7"/><ellipse cx="7.500" cy="7.500" rx="3.500" ry="7"/><path d="M1 5h13M1 10h9"/><circle cx="12.500" cy="12" r="3.500" fill="#111"/><path d="M10.500 10l4 4"/></svg>
  <svg width="17" height="14"><path d="M.5 4.500H3L6.500 1v12L3 9.500H.5zM9 4.500c1.500 1.500 1.500 3.500 0 5M11.500 2.500c2.500 2.500 2.500 6.500 0 9M14 .8c3.300 3.500 3.300 9 0 12.500"/></svg>
  <span class="fit" data-w="23">ENG</span>
  <span class="fit" data-w="43">9:26 AM</span>
  <svg width="16" height="16"><path d="M.5 1.500h15v11h-5L8 15l-2.500-2.500h-5z"/></svg>
  <svg width="1" height="30"><path d="M.5 0v30" stroke="#777"/></svg>
</div>

<script src="https://cdn.jsdelivr.net/npm/bootstrap@5.3.0/dist/js/bootstrap.bundle.min.js"></script>
<script>
// Track each label so that it fills its data-w width.
document.querySelectorAll('.fit').forEach(function (el) {
  var n = el.textContent.length;
  el.style.letterSpacing = (el.dataset.w - el.getBoundingClientRect().width) / n + 'px';
});
// Stretch the formula glyphs to their set length.
document.querySelectorAll('.eqt text[data-l]').forEach(function (el) {
  var k = el.dataset.l / el.getComputedTextLength(), x = el.getAttribute('x');
  el.setAttribute('transform', 'translate(' + x * (1 - k) + ' 0) scale(' + k + ' 1)');
});
</script>
</body>
</html>
